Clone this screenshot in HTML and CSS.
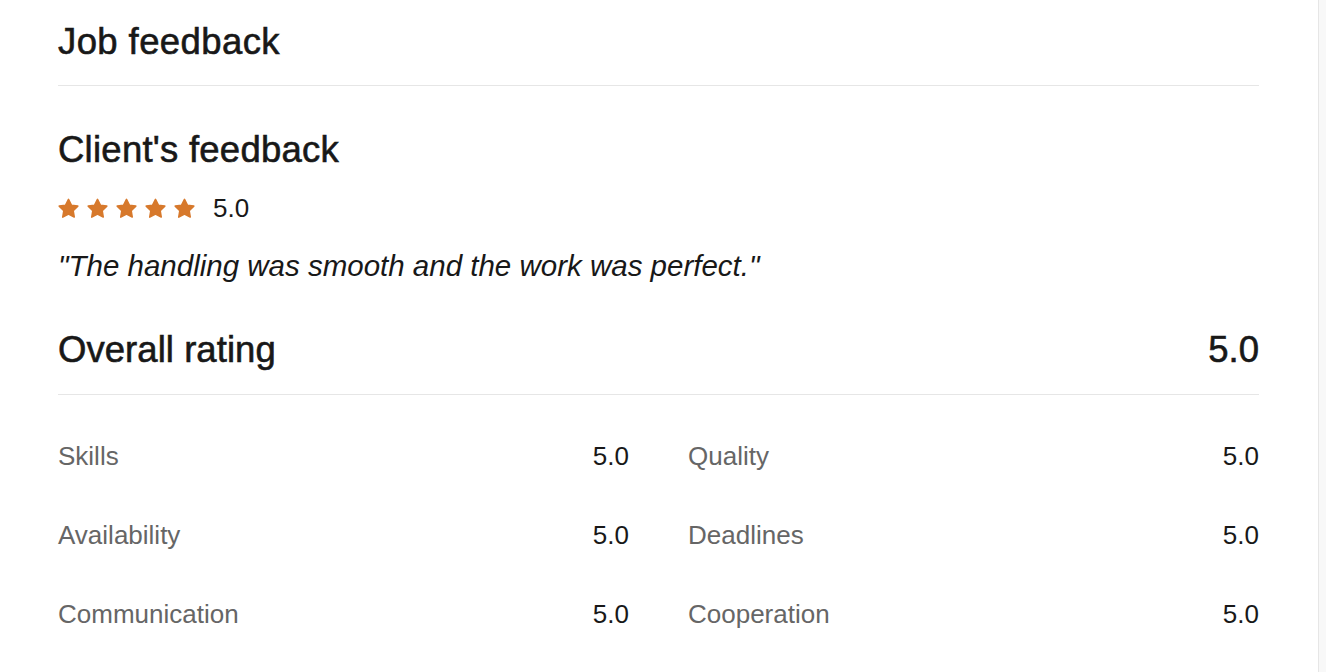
FILE: index.html
```html
<!DOCTYPE html>
<html lang="en">
<head>
<meta charset="utf-8">
<title>Job feedback</title>
<link rel="stylesheet" href="styles.css">
</head>
<body>
<div class="page">
  <main class="content">
    <header class="header">
      <h1 class="title">Job feedback</h1>
    </header>
    <section class="client">
      <h2 class="subtitle client-title">Client's feedback</h2>
      <div class="stars-row">
        <div class="stars">
          <svg class="star" viewBox="0 0 20 20"><path d="M10 1.3 L12.75 6.85 L18.85 7.75 L14.43 12.05 L15.47 18.15 L10 15.28 L4.53 18.15 L5.57 12.05 L1.15 7.75 L7.25 6.85 Z"/></svg>
          <svg class="star" viewBox="0 0 20 20"><path d="M10 1.3 L12.75 6.85 L18.85 7.75 L14.43 12.05 L15.47 18.15 L10 15.28 L4.53 18.15 L5.57 12.05 L1.15 7.75 L7.25 6.85 Z"/></svg>
          <svg class="star" viewBox="0 0 20 20"><path d="M10 1.3 L12.75 6.85 L18.85 7.75 L14.43 12.05 L15.47 18.15 L10 15.28 L4.53 18.15 L5.57 12.05 L1.15 7.75 L7.25 6.85 Z"/></svg>
          <svg class="star" viewBox="0 0 20 20"><path d="M10 1.3 L12.75 6.85 L18.85 7.75 L14.43 12.05 L15.47 18.15 L10 15.28 L4.53 18.15 L5.57 12.05 L1.15 7.75 L7.25 6.85 Z"/></svg>
          <svg class="star" viewBox="0 0 20 20"><path d="M10 1.3 L12.75 6.85 L18.85 7.75 L14.43 12.05 L15.47 18.15 L10 15.28 L4.53 18.15 L5.57 12.05 L1.15 7.75 L7.25 6.85 Z"/></svg>
        </div>
        <span class="score">5.0</span>
      </div>
      <p class="quote">"The handling was smooth and the work was perfect."</p>
    </section>
    <section class="overall">
      <h2 class="subtitle overall-title">Overall rating</h2>
      <span class="overall-score">5.0</span>
    </section>
    <div class="breakdown">
      <div class="item"><span class="label">Skills</span><span class="value">5.0</span></div>
      <div class="item"><span class="label">Quality</span><span class="value">5.0</span></div>
      <div class="item"><span class="label">Availability</span><span class="value">5.0</span></div>
      <div class="item"><span class="label">Deadlines</span><span class="value">5.0</span></div>
      <div class="item"><span class="label">Communication</span><span class="value">5.0</span></div>
      <div class="item"><span class="label">Cooperation</span><span class="value">5.0</span></div>
    </div>
  </main>
  <div class="scrollbar"></div>
</div>
</body>
</html>
```
FILE: styles.css
```css
html, body {
  margin: 0;
  padding: 0;
  background: #ffffff;
}
body {
  font-family: "Liberation Sans", Arial, sans-serif;
  color: #181818;
  overflow: hidden;
}
.page {
  display: flex;
  height: 672px;
}
.content {
  flex: 1;
  padding: 20px 59px 0 58px;
  min-width: 0;
}
.scrollbar {
  width: 7px;
  border-left: 1px solid #e6e6e6;
  background: #f8f8f8;
}
.header {
  border-bottom: 1px solid #e6e6e6;
  padding-bottom: 21px;
}
.title, .subtitle {
  margin: 0;
  font-size: 36.5px;
  line-height: 44px;
  font-weight: 400;
  color: #181818;
  letter-spacing: 0.4px;
  -webkit-text-stroke: 0.6px #181818;
}
.client-title {
  letter-spacing: 0.25px;
}
.overall-title {
  letter-spacing: 0.05px;
}
.client {
  padding-top: 42px;
}
.stars-row {
  display: flex;
  align-items: center;
  gap: 18px;
  margin-top: 24px;
  height: 24px;
}
.stars {
  display: flex;
  gap: 8px;
}
.star {
  width: 21px;
  height: 21px;
  fill: #d7792c;
  stroke: #d7792c;
  stroke-width: 1.5;
  stroke-linejoin: round;
}
.score {
  font-size: 26px;
  line-height: 24px;
  color: #181818;
}
.quote {
  margin: 28px 0 0;
  font-size: 29.5px;
  line-height: 36px;
  font-style: italic;
  color: #181818;
}
.overall {
  margin-top: 44px;
  display: flex;
  justify-content: space-between;
  align-items: center;
  padding-bottom: 22px;
  border-bottom: 1px solid #e6e6e6;
}
.overall-score {
  font-size: 36.5px;
  line-height: 44px;
  color: #181818;
  -webkit-text-stroke: 0.6px #181818;
}
.breakdown {
  display: grid;
  grid-template-columns: 1fr 1fr;
  column-gap: 59px;
  row-gap: 47px;
  padding-top: 45px;
}
.item {
  display: flex;
  justify-content: space-between;
  align-items: center;
  height: 32px;
  font-size: 26px;
  line-height: 32px;
}
.label {
  color: #666666;
}
.value {
  color: #181818;
}
```
